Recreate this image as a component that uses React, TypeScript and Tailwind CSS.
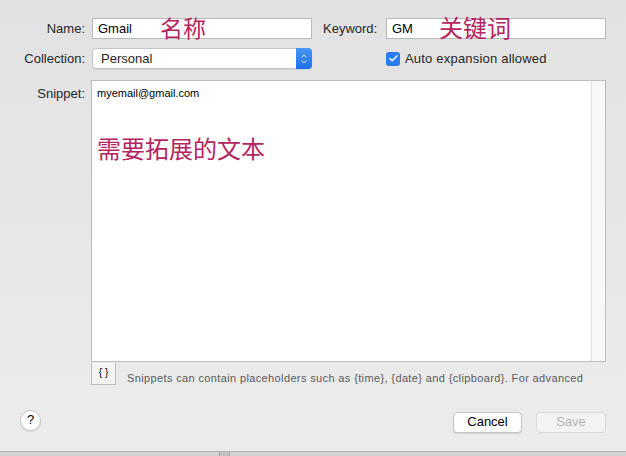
import { Check, ChevronDown, ChevronUp } from "lucide-react";

const sans = "font-['Helvetica_Neue','Liberation_Sans','Noto_Sans_CJK_SC',sans-serif]";
const cjk = "font-['Noto_Sans_CJK_SC',sans-serif] text-[#b5245f]";

function TextField({ value, note, noteClass }: { value: string; note: string; noteClass: string }) {
  return (
    <div className="relative h-[21px] w-[220px] border border-[#b9b9b9] bg-white pl-[5px] text-[13px] leading-[19px] text-black">
      {value}
      <span className={`absolute top-[-6px] ${noteClass} ${cjk} leading-[28px]`}>{note}</span>
    </div>
  );
}

export default function App() {
  return (
    <div className={`${sans} h-[456px] w-[626px] overflow-hidden bg-[#d4d4d4] text-[#262626]`}>
      <div className="flex h-[452px] flex-col border-b border-[#b0b0b0] bg-gradient-to-b from-[#e2e2e2] to-[#ececec] pt-[18px]">
        {/* name / keyword */}
        <div className="flex items-center text-[13px]">
          <span className="w-[85px] text-right">Name:</span>
          <div className="ml-[7px]">
            <TextField value="Gmail" note="名称" noteClass="left-[67px] text-[23px]" />
          </div>
          <span className="ml-[11px] w-[57px]">Keyword:</span>
          <div className="ml-[6px]">
            <TextField value="GM" note="关键词" noteClass="left-[52px] text-[24px]" />
          </div>
        </div>

        {/* collection */}
        <div className="mt-[9px] flex items-center text-[13px]">
          <span className="w-[85px] text-right">Collection:</span>
          <div className="ml-[7px] flex h-[21px] w-[220px] items-center justify-between rounded-[4px] border border-[#c4c4c4] bg-white pl-[8px] shadow-[0_1px_1px_rgba(0,0,0,0.08)]">
            <span>Personal</span>
            <div className="mr-[-1px] flex h-[21px] w-[16px] flex-col items-center justify-center rounded-r-[4px] bg-gradient-to-b from-[#4a96f7] to-[#1c6ff0] text-white">
              <ChevronUp size={8} strokeWidth={3} className="mb-[-1px]" />
              <ChevronDown size={8} strokeWidth={3} className="mt-[-1px]" />
            </div>
          </div>
          <div className="ml-[74px] flex items-center">
            <div className="flex h-[14px] w-[14px] items-center justify-center rounded-[3px] bg-[#2a7cf3] text-white">
              <Check size={11} strokeWidth={3} />
            </div>
            <span className="ml-[5px] tracking-[0.2px]">Auto expansion allowed</span>
          </div>
        </div>

        {/* snippet */}
        <div className="mt-[11px] flex text-[13px]">
          <span className="w-[85px] pt-[4px] text-right">Snippet:</span>
          <div className="ml-[6px] flex h-[282px] w-[515px] border border-[#bdbdbd] bg-white">
            <div className="flex-1 pl-[5px] pt-[5px]">
              <div className="text-[11px] leading-[14px] text-black">myemail@gmail.com</div>
              <div className={`${cjk} mt-[32px] text-[24px] leading-[32px]`}>需要拓展的文本</div>
            </div>
            <div className="w-[14px] border-l border-[#e0e0e0] bg-[#f7f7f7]" />
          </div>
        </div>

        <div className="flex items-center">
          <div className="ml-[91px] flex h-[22px] w-[25px] items-center justify-center border border-t-0 border-[#bdbdbd] bg-[#f4f4f4] pb-[2px] text-[10px] text-black">
            {"{ }"}
          </div>
          <span className="ml-[11px] mt-[8px] text-[11px] tracking-[0.37px] text-[#5a5a5a]">
            Snippets can contain placeholders such as {"{time}"}, {"{date}"} and {"{clipboard}"}. For advanced
          </span>
        </div>

        {/* footer */}
        <div className="mt-[21px] flex items-center">
          <div className="ml-[20px] flex h-[21px] w-[21px] items-center justify-center rounded-full border border-[#c8c8c8] bg-white text-[13px] font-medium text-black shadow-[0_1px_1px_rgba(0,0,0,0.1)]">
            ?
          </div>
          <div className="ml-auto mr-[20px] mt-[4px] flex gap-[14px] text-[13px]">
            <div className="flex h-[21px] w-[69px] items-center justify-center rounded-[4px] border border-[#c4c4c4] bg-white text-black shadow-[0_1px_1px_rgba(0,0,0,0.1)]">
              Cancel
            </div>
            <div className="flex h-[21px] w-[70px] items-center justify-center rounded-[4px] border border-[#dadada] bg-[#f3f3f3] text-[#b3b3b3]">
              Save
            </div>
          </div>
        </div>
      </div>
      <div className="ml-[219px] h-[4px] w-[11px] border-x border-[#a8a8a8] bg-[#c4c4c4]" />
    </div>
  );
}
